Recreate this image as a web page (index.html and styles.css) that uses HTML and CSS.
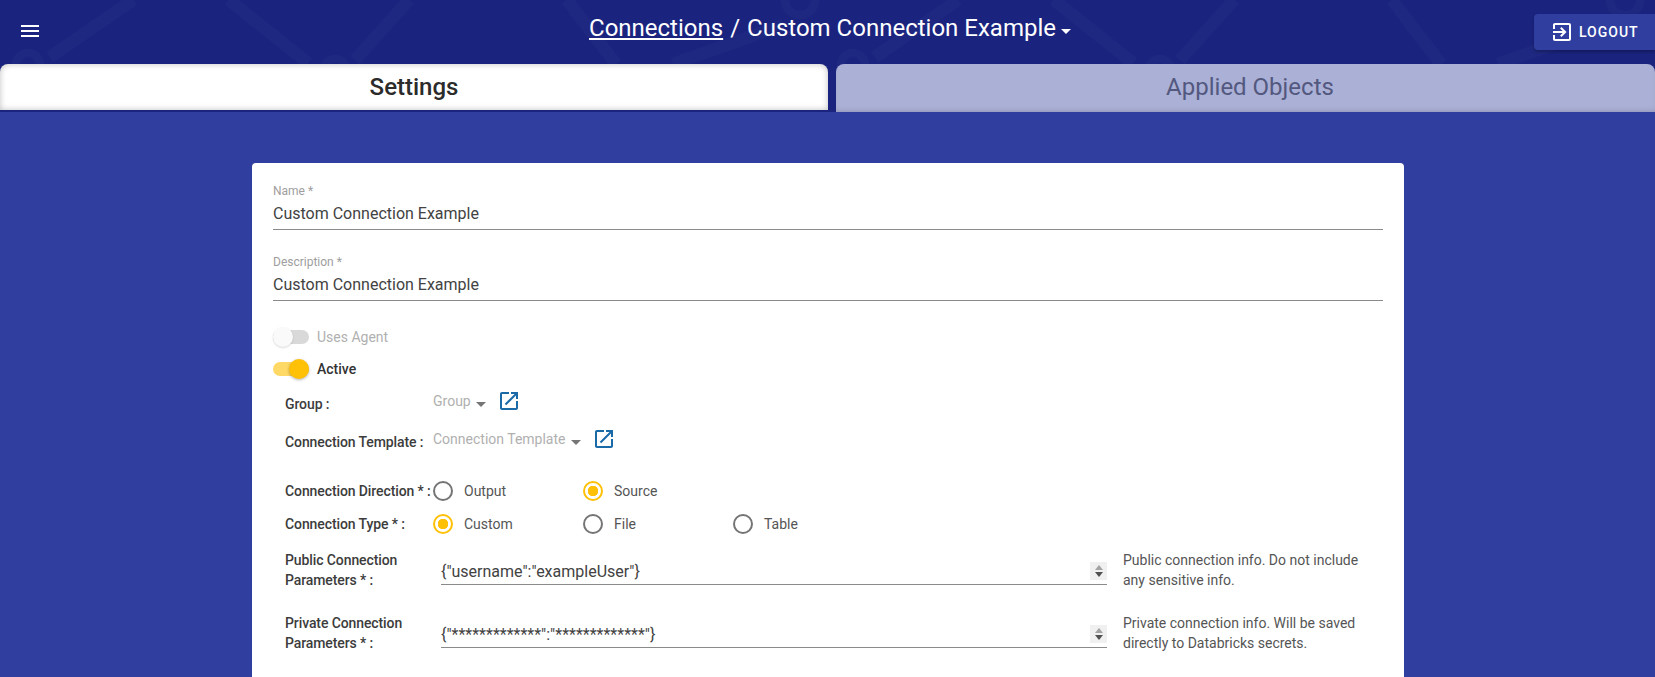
FILE: index.html
```html
<!DOCTYPE html>
<html>
<head>
  <title>Custom Connection Example</title>
  <link rel="stylesheet" href="styles.css">
</head>
<body>
<div class="page">
  <div class="header">
    <svg class="header_pattern" width="1655" height="112">
      <defs>
        <pattern id="lines" width="825" height="112" patternUnits="userSpaceOnUse">
          <g fill="none" stroke="#1f2881" stroke-width="12">
            <path d="M133 0L50 57"/>
            <path d="M229 0L308 63"/>
            <path d="M409 0L355 60"/>
            <path d="M567 0L616 64"/>
            <path d="M783 25L673 64"/>
            <circle cx="28" cy="65" r="12" stroke-width="8"/>
            <circle cx="335" cy="71" r="12" stroke-width="8"/>
            <circle cx="800" cy="0" r="15" stroke-width="8"/>
          </g>
        </pattern>
      </defs>
      <rect width="1655" height="112" fill="url(#lines)"/>
    </svg>
    <div class="topbar">
      <button class="menu_btn">
        <svg width="24" height="24" viewBox="0 0 24 24"><path fill="#fff" d="M3 18h18v-2H3v2zm0-5h18v-2H3v2zm0-7v2h18V6H3z"/></svg>
      </button>
      <div class="title">
        <a class="title_link">Connections</a>
        <span class="title_sep">/</span>
        <span>Custom Connection Example</span>
        <span class="caret caret_white"></span>
      </div>
      <button class="logout_btn">
        <svg width="24" height="24" viewBox="0 0 24 24"><path fill="#fff" d="M10.09 15.59L11.5 17l5-5-5-5-1.41 1.41L12.67 11H3v2h9.67l-2.58 2.59zM19 3H5c-1.11 0-2 .9-2 2v4h2V5h14v14H5v-4H3v4c0 1.1.89 2 2 2h14c1.1 0 2-.9 2-2V5c0-1.1-.9-2-2-2z"/></svg>
        Logout
      </button>
    </div>
    <div class="tabs">
      <div class="tab tab_active">Settings</div>
      <div class="tab tab_off">Applied Objects</div>
    </div>
  </div>

  <div class="card">
    <div class="text_field">
      <label class="float_label">Name *</label>
      <div class="text_value">Custom Connection Example</div>
    </div>
    <div class="text_field">
      <label class="float_label">Description *</label>
      <div class="text_value">Custom Connection Example</div>
    </div>

    <div class="toggles">
      <div class="toggle_row toggle_disabled">
        <span class="toggle"><span class="toggle_thumb"></span></span>
        Uses Agent
      </div>
      <div class="toggle_row toggle_on">
        <span class="toggle"><span class="toggle_thumb"></span></span>
        Active
      </div>
    </div>

    <div class="form_rows">
      <div class="row row_select">
        <div class="row_label">Group :</div>
        <div class="select_value">Group <span class="caret"></span></div>
        <svg class="open_icon" width="24" height="24" viewBox="0 0 24 24"><path d="M19 19H5V5h7V3H5c-1.11 0-2 .9-2 2v14c0 1.1.89 2 2 2h14c1.1 0 2-.9 2-2v-7h-2v7zM14 3v2h3.59l-9.83 9.83 1.41 1.41L19 6.41V10h2V3h-7z"/></svg>
      </div>
      <div class="row row_select">
        <div class="row_label">Connection Template :</div>
        <div class="select_value">Connection Template <span class="caret"></span></div>
        <svg class="open_icon" width="24" height="24" viewBox="0 0 24 24"><path d="M19 19H5V5h7V3H5c-1.11 0-2 .9-2 2v14c0 1.1.89 2 2 2h14c1.1 0 2-.9 2-2v-7h-2v7zM14 3v2h3.59l-9.83 9.83 1.41 1.41L19 6.41V10h2V3h-7z"/></svg>
      </div>

      <div class="row row_radio row_direction">
        <div class="row_label">Connection Direction * :</div>
        <div class="radio"><span class="radio_dot"></span>Output</div>
        <div class="radio radio_on"><span class="radio_dot"></span>Source</div>
      </div>
      <div class="row row_radio">
        <div class="row_label">Connection Type * :</div>
        <div class="radio radio_on"><span class="radio_dot"></span>Custom</div>
        <div class="radio"><span class="radio_dot"></span>File</div>
        <div class="radio"><span class="radio_dot"></span>Table</div>
      </div>

      <div class="row row_params">
        <div class="row_label">Public Connection Parameters * :</div>
        <div class="param_input">
          <span>{"username":"exampleUser"}</span>
          <span class="spinner"><i class="spin_up"></i><i class="spin_down"></i></span>
        </div>
        <div class="param_help">Public connection info. Do not include any sensitive info.</div>
      </div>
      <div class="row row_params">
        <div class="row_label">Private Connection Parameters * :</div>
        <div class="param_input">
          <span>{"*************":"*************"}</span>
          <span class="spinner"><i class="spin_up"></i><i class="spin_down"></i></span>
        </div>
        <div class="param_help">Private connection info. Will be saved directly to Databricks secrets.</div>
      </div>
    </div>
  </div>
</div>
</body>
</html>
```

FILE: styles.css
```css
html, body {
  margin: 0;
  padding: 0;
}

body {
  font-family: Roboto, "Liberation Sans", sans-serif;
  background-color: #303f9f;
}

.page {
  height: 677px;
  overflow: hidden;
}

.header {
  position: relative;
  background-color: #1a237e;
}

.header_pattern {
  position: absolute;
  top: 0;
  left: 0;
}

.topbar {
  position: relative;
  height: 64px;
  display: flex;
  align-items: flex-start;
  justify-content: center;
}

.menu_btn {
  position: absolute;
  top: 19px;
  left: 18px;
  padding: 0;
  height: 24px;
  border: none;
  background: none;
}

.title {
  margin: 13px 0 0 5px;
  font-size: 24px;
  line-height: 30px;
  color: #fff;
  display: flex;
  align-items: center;
}

.title_link {
  text-decoration: underline;
}

.title_sep {
  margin: 0 7px;
}

.caret {
  display: inline-block;
  width: 0;
  height: 0;
  border-left: 5px solid transparent;
  border-right: 5px solid transparent;
  border-top: 5px solid #757575;
}

.caret_white {
  border-top-color: #fff;
  margin: 6px 0 0 5px;
}

.logout_btn {
  position: absolute;
  top: 14px;
  right: 0;
  height: 36px;
  width: 121px;
  padding: 0 0 0 16px;
  display: flex;
  align-items: center;
  gap: 5px;
  border: none;
  border-radius: 4px 0 0 4px;
  background-color: #303f9f;
  color: #fff;
  font-family: inherit;
  font-size: 14px;
  font-weight: 500;
  letter-spacing: 1px;
  text-transform: uppercase;
  box-shadow: 0 2px 3px rgba(0, 0, 0, 0.25);
}

.tabs {
  position: relative;
  display: flex;
  gap: 8px;
  height: 48px;
}

.tab {
  text-align: center;
  font-size: 24px;
  line-height: 47px;
  border-radius: 8px 8px 0 0;
}

.tab_active {
  width: 828px;
  height: 46px;
  background-color: #fff;
  color: #2b2b2b;
  font-weight: 500;
  box-shadow: inset 0 0 6px rgba(0, 0, 0, 0.25);
}

.tab_off {
  flex: 1;
  padding-left: 9px;
  background-color: #abb0d6;
  color: #53587f;
  box-shadow: inset 0 -4px 6px -4px rgba(0, 0, 0, 0.2);
}

.card {
  margin: 51px 0 0 252px;
  width: 1110px;
  height: 600px;
  padding: 21px;
  background-color: #fff;
  border-radius: 4px;
}

.text_field {
  height: 45px;
  border-bottom: 1px solid #8a8a8a;
}

.text_field + .text_field {
  margin-top: 25px;
}

.float_label {
  display: block;
  font-size: 12px;
  line-height: 14px;
  color: #9e9e9e;
}

.text_value {
  margin-top: 4px;
  font-size: 16px;
  line-height: 24px;
  color: #424242;
}

.toggles {
  margin-top: 20px;
}

.toggle_row {
  display: flex;
  align-items: center;
  gap: 8px;
  height: 32px;
  font-size: 14px;
  color: #333;
  font-weight: 500;
}

.toggle_disabled {
  color: #b0b0b0;
  font-weight: 400;
}

.toggle {
  position: relative;
  display: inline-block;
  width: 36px;
  height: 14px;
  border-radius: 7px;
  background-color: #ffd966;
}

.toggle_disabled .toggle {
  background-color: #d9d9d9;
}

.toggle_thumb {
  position: absolute;
  top: -3px;
  right: 0;
  width: 20px;
  height: 20px;
  border-radius: 50%;
  background-color: #ffc107;
  box-shadow: 0 1px 3px rgba(0, 0, 0, 0.3);
}

.toggle_disabled .toggle_thumb {
  right: auto;
  left: 0;
  background-color: #fafafa;
  box-shadow: 0 1px 2px rgba(0, 0, 0, 0.15);
}

.form_rows {
  padding-left: 12px;
}

.row {
  display: flex;
}

.row_label {
  width: 148px;
  flex: none;
  font-size: 14px;
  line-height: 20px;
  font-weight: 500;
  letter-spacing: -0.1px;
  color: #3c3c3c;
}

.row_select .row_label,
.row_radio .row_label {
  white-space: nowrap;
}

.row_select {
  align-items: center;
  height: 38px;
}

.select_value {
  margin-top: -6px;
  font-size: 14px;
  color: #b0b0b0;
}

.select_value .caret {
  margin-left: 2px;
  vertical-align: -1px;
}

.open_icon {
  margin: -6px 0 0 11px;
  fill: #1a6aa8;
}

.row_radio {
  align-items: center;
  height: 33px;
}

.row_direction {
  margin-top: 13px;
}

.radio {
  width: 150px;
  display: flex;
  align-items: center;
  gap: 11px;
  font-size: 14px;
  color: #555;
}

.radio_dot {
  box-sizing: border-box;
  width: 20px;
  height: 20px;
  border: 2px solid #757575;
  border-radius: 50%;
}

.radio_on .radio_dot {
  border-color: #ffc107;
  background: radial-gradient(circle, #ffc107 0 5px, transparent 5.5px);
}

.row_params {
  align-items: flex-start;
  height: 53px;
  padding-top: 10px;
}

.param_input {
  box-sizing: border-box;
  width: 666px;
  height: 35px;
  margin-left: 8px;
  display: flex;
  justify-content: space-between;
  align-items: flex-end;
  font-size: 16px;
  line-height: 24px;
  color: #424242;
  border-bottom: 1px solid #8a8a8a;
}

.spinner {
  width: 17px;
  height: 18px;
  margin-bottom: 4px;
  background-color: #f0f0f0;
  display: flex;
  flex-direction: column;
  align-items: center;
  justify-content: center;
  gap: 2px;
}

.spin_up {
  border-left: 4px solid transparent;
  border-right: 4px solid transparent;
  border-bottom: 5px solid #a3a3a3;
}

.spin_down {
  border-left: 4px solid transparent;
  border-right: 4px solid transparent;
  border-top: 5px solid #505050;
}

.param_help {
  width: 240px;
  margin-left: 16px;
  font-size: 14px;
  line-height: 20px;
  color: #555;
}
```
